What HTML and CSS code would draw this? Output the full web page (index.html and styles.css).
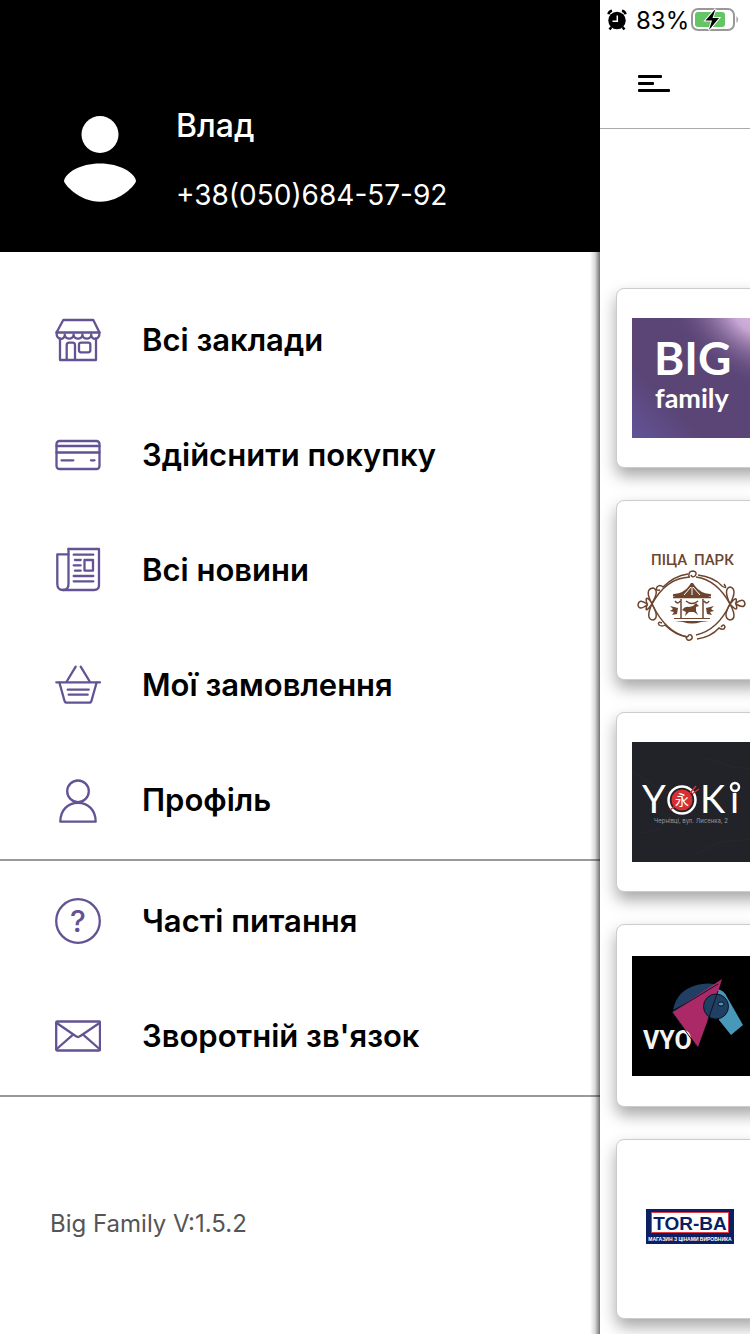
FILE: index.html
```html
<!DOCTYPE html>
<html lang="uk">
<head>
    <meta charset="UTF-8">
    <meta name="viewport" content="width=device-width, initial-scale=1.0">
    <title>Big Family</title>
    <link rel="stylesheet" href="styles.css">
</head>
<body>

<div class="app">
    <aside class="drawer">
        <header class="user">
            <svg class="avatar" viewBox="0 0 72 86">
                <circle cx="36" cy="18.5" r="18.5"/>
                <path d="M0 65C1 57 16 47.5 36 47.5S71 57 72 65C72 68 57 85.7 36 85.7S0 68 0 65Z"/>
            </svg>
            <div class="user-info">
                <div class="user-name">Влад</div>
                <div class="user-phone">+38(050)684-57-92</div>
            </div>
        </header>

        <div class="drawer-body">
            <nav class="menu menu-main">
                <a href="#">
                    <svg class="icon" viewBox="0 0 46 46">
                        <path d="M8.3 3h30l6.2 12.5h-43z"/>
                        <path d="M1.5 15.5c0 8 8.3 8 8.3 2c0 5.5 8.8 5.5 8.8 0c0 5.5 8.8 5.5 8.8 0c0 5.5 8.8 5.5 8.8 0c0 6 8.3 6 8.3-2"/>
                        <path d="M5 21.5V43h36V21.5"/>
                        <path d="M11.7 43V28.2q0-2.5 2.5-2.5h3.3q2.5 0 2.5 2.5V43"/>
                        <rect x="24" y="25.7" width="11.3" height="9.6" rx="2"/>
                    </svg>
                    <span>Всі заклади</span>
                </a>
                <a href="#">
                    <svg class="icon" viewBox="0 0 46 46">
                        <rect x="1.5" y="9" width="43" height="28" rx="3"/>
                        <path d="M1.5 14h43M1.5 20.5h43M6.5 28.3h11.8M36 28.3h3.5"/>
                    </svg>
                    <span>Здійснити покупку</span>
                </a>
                <a href="#">
                    <svg class="icon" viewBox="0 0 46 46">
                        <path d="M13.5 2H44v36q0 5-5 5H8q-5.7 0-5.7-6V7.3h11.2"/>
                        <path d="M13.5 2v35q0 6-5.5 6"/>
                        <path d="M18.7 7.7h19.6M20 13h5.7M18.7 18.3h7M20 23.7h5.7M18.7 29h19.6M18.7 34.3h19.6"/>
                        <rect x="29.5" y="13" width="8.5" height="10.7"/>
                    </svg>
                    <span>Всі новини</span>
                </a>
                <a href="#">
                    <svg class="icon" viewBox="0 0 46 46">
                        <path d="M1.3 20.3h43.7M4.3 20.3l5.2 18.4q.5 2 2.5 2h22q2 0 2.5-2l5.2-18.4"/>
                        <path d="M11.7 19.5l9-14.8M25.7 4.7l9 14.8M12.7 27.7h21M13.7 32.7h19"/>
                    </svg>
                    <span>Мої замовлення</span>
                </a>
                <a href="#">
                    <svg class="icon" viewBox="0 0 46 46">
                        <circle cx="23" cy="14.3" r="10.8"/>
                        <path d="M5.3 44.7C5.3 33 13 25.9 23 25.9S40.7 33 40.7 44.7Z"/>
                    </svg>
                    <span>Профіль</span>
                </a>
            </nav>
            <nav class="menu">
                <a href="#">
                    <svg class="icon" viewBox="0 0 46 46">
                        <circle cx="23" cy="23" r="21.8"/>
                        <text x="23" y="34" text-anchor="middle">?</text>
                    </svg>
                    <span>Часті питання</span>
                </a>
                <a href="#">
                    <svg class="icon" viewBox="0 0 46 46">
                        <rect x="1.2" y="8.5" width="43.8" height="29" rx="1"/>
                        <path d="M1.7 10l19.3 13.2q2 1.6 4 0L44.5 10M18.3 21.4L1.7 36M27.8 21.4L44.5 36"/>
                    </svg>
                    <span>Зворотній зв'язок</span>
                </a>
            </nav>
            <p class="version">Big Family V:1.5.2</p>
        </div>
    </aside>

    <main class="page">
        <div class="status">
            <svg class="alarm" viewBox="0 0 20 22">
                <circle cx="10" cy="11.5" r="8.7"/>
                <path d="M1.5 5.2Q2 2.5 5 1.8M18.5 5.2Q18 2.5 15 1.8M4.5 18l-2 2.5M15.5 18l2 2.5"/>
                <path class="hands" d="M10.3 6.5v5.8H5.5"/>
            </svg>
            <span>83%</span>
            <svg class="battery" viewBox="0 0 48 24">
                <rect class="shell" x="1" y="1" width="42" height="21" rx="6"/>
                <path class="shell-tip" d="M45.5 8q3 3.5 0 7z"/>
                <rect class="charge" x="4" y="4" width="30" height="15" rx="3"/>
                <path class="bolt" d="M24.5 1L14.5 12.5h6.500l-3 9.500L28 10h-6.500z"/>
            </svg>
        </div>
        <div class="topbar">
            <button class="burger" aria-label="Меню"><i></i><i></i><i></i></button>
        </div>

        <div class="shops">
            <a class="card" href="#">
                <svg class="logo" viewBox="0 0 120 120">
                    <defs>
                        <linearGradient id="bg" x1="0" y1="1" x2="1" y2="0">
                            <stop offset="0" stop-color="#625497"/>
                            <stop offset=".3" stop-color="#5b4577"/>
                            <stop offset="1" stop-color="#5b4577"/>
                        </linearGradient>
                        <radialGradient id="glow" gradientUnits="userSpaceOnUse" cx="0" cy="0" r="1" gradientTransform="translate(120 0) rotate(35) scale(100 62)">
                            <stop offset="0" stop-color="#d2b0dd"/>
                            <stop offset=".2" stop-color="#c8a7d4"/>
                            <stop offset="1" stop-color="#5b4577" stop-opacity="0"/>
                        </radialGradient>
                    </defs>
                    <rect width="120" height="120" fill="url(#bg)"/>
                    <rect width="120" height="120" fill="url(#glow)"/>
                    <g class="big-family">
                        <text x="22" y="57" font-size="46">BIG</text>
                        <text x="23" y="90" font-size="27">family</text>
                    </g>
                </svg>
            </a>
            <a class="card" href="#">
                <svg class="logo park" viewBox="0 0 120 120">
                    <text x="19" y="35">ПІЦА</text>
                    <text x="62" y="35">ПАРК</text>
                    <path d="M20 74Q34 48 58 47M64 47Q85 50 98 74Q86 100 64 105M56 107Q34 103 20 74"/>
                    <path d="M28 60q-5 1-3-3q3-3 6 0Q42 46 56 44M66 45q16 2 24 11q6 4 2-2M30 93q-5-2-3 2q3 2 6 0q10 10 22 12M65 109q14-2 22-11q5 3 6-1q-1-4-4 0"/>
                    <path d="M57 47q-1-6 4-6q5 1 2 5q-3 2-4-1M54 106q0 5 4 4q4-2 1-5q-3-1-3 2"/>
                    <path d="M20 74q-8-15 1-16q7 2-1 15q-8-10-5 1q-8-6-9 1q1 6 9 0q-3 10 5-1q8 14 1 16q-8-1-1-16M98 74q8-15 0-17q-7 2 0 17q8-10 6-1q8-6 9 1q-1 5-9 0q3 10-6 0q-8 14 0 16q8-1 0-16"/>
                    <path class="fill" d="M41 66q0-3 1-2q10-1 15-8l2-3h2l2 3q5 7 15 8q1-1 1 2l-3 1H43zM42 88h36v1H42zM43 91h34l-8 1q-9 3-18 0z"/>
                    <path class="fill" d="M50 80q3-4 7-3l4-1 3-3 3 3-3 1v4l2 4-4-3h-5l-4 4 1-4zM38 76l8 2-1 6-5 1 2-3-4-1 3-2zM82 76l-8 2 1 6 5 1-2-3 4-1-3-2z"/>
                    <path d="M41 67.5h38M49 69v19M71 69v19M43 71q3 4 5 0M54 71q6 5 12 0M72 71q3 4 5 0"/>
                    <path class="slots" d="M59 57l-7 8M60 57v8M61 57l7 8"/>
                </svg>
            </a>
            <a class="card" href="#">
                <svg class="logo" viewBox="0 0 120 120">
                    <rect width="120" height="120" fill="#222328"/>
                    <path d="M0 30l30 18l14 7M72 16l28 9l20 2M60 114l28-14l32-3M5 92l24-5" fill="none" stroke="#27282d"/>
                    <g class="yoki">
                        <text x="10" y="71">Y</text>
                        <text x="68" y="71">K</text>
                        <text x="98" y="71">ı</text>
                        <circle cx="50" cy="58" r="13.5"/>
                        <circle cx="103" cy="45" r="4"/>
                    </g>
                    <circle cx="50" cy="58" r="10.5" fill="#d72f32"/>
                    <path d="M38 68l5-4M58 51l6-7M60 52l7-5" stroke="#d72f32" stroke-width="1.5"/>
                    <text class="kanji" x="50" y="63" text-anchor="middle">永</text>
                    <text class="address" x="59" y="81" text-anchor="middle">Чернівці, вул. Лисенка, 2</text>
                </svg>
            </a>
            <a class="card card-tall" href="#">
                <svg class="logo" viewBox="0 0 120 120">
                    <rect width="120" height="120"/>
                    <path d="M41 54Q45 34 65 29Q75 26 88 29z" fill="#213e63"/>
                    <path d="M85 33q7 1 10 8l16 28-12 10-12-15z" fill="#4898b9"/>
                    <path d="M40 56L90 23l-4 13L66 91z" fill="#ab2967"/>
                    <circle cx="84" cy="50.5" r="12.5" fill="#213e63" stroke="#0b1524"/>
                    <text class="vyo" x="11" y="93">VYO</text>
                    <path d="M86 35L76 64M40 56L65 91M40 56L86 28" fill="none" stroke="#0b1524"/>
                    <ellipse cx="89" cy="48" rx="3" ry="2" fill="#4898b9" stroke="#0b1524"/>
                </svg>
            </a>
            <a class="card" href="#">
                <svg class="logo" viewBox="0 0 120 120">
                    <rect x="14" y="40" width="88" height="35" fill="#0b1f62"/>
                    <rect x="19.5" y="43.5" width="77" height="20" fill="#fff" stroke="#df3a45"/>
                    <text class="torba" x="58" y="61" text-anchor="middle">TOR-BA</text>
                    <text class="torba-sub" x="58" y="72" text-anchor="middle">МАГАЗИН З ЦІНАМИ ВИРОБНИКА</text>
                </svg>
            </a>
        </div>
    </main>
</div>

</body>
</html>
```
FILE: styles.css
```css
* {
    box-sizing: border-box;
}
body {
    margin: 0;
    font-family: Inter, "Liberation Sans", sans-serif;
    color: #000;
    background-color: #fff;
}
a {
    color: inherit;
    text-decoration: none;
}
svg {
    display: block;
    flex: none;
}
.app {
    display: flex;
    height: 100vh;
    overflow: hidden;
}

/* Side menu */
.drawer {
    width: 80%;
    display: flex;
    flex-direction: column;
}
.user {
    display: flex;
    align-items: center;
    gap: 40px;
    padding: 106px 64px 40px;
    color: #fff;
    background-color: #000;
}
.avatar {
    width: 72px;
    height: 86px;
    fill: #fff;
}
.user-info {
    display: flex;
    flex-direction: column;
    gap: 32px;
}
.user-name {
    font-size: 32px;
    line-height: 40px;
    font-weight: 500;
}
.user-phone {
    font-size: 28px;
    line-height: 34px;
}
.drawer-body {
    position: relative;
    flex: 1;
}
.drawer-body::after {
    content: "";
    position: absolute;
    top: 0;
    right: 0;
    bottom: 0;
    width: 10px;
    background: linear-gradient(to left, rgba(0, 0, 0, 0.55), rgba(0, 0, 0, 0.15) 50%, transparent);
}
.menu {
    padding: 2px 0;
    border-bottom: 2px solid #999;
}
.menu-main {
    padding-top: 30px;
}
.menu a {
    display: flex;
    align-items: center;
    gap: 41px;
    height: 115px;
    padding-left: 55px;
    font-size: 31px;
    line-height: 40px;
    font-weight: 600;
}
.icon {
    width: 46px;
    height: 46px;
    fill: none;
    stroke: #635394;
    stroke-width: 2.3;
    stroke-linecap: round;
    stroke-linejoin: round;
}
.icon text {
    font-size: 30px;
    font-weight: 500;
    fill: #635394;
    stroke: none;
}
.version {
    margin: 112px 0 0 50px;
    font-size: 24px;
    line-height: 30px;
    color: #555;
}

/* Page behind the menu */
.page {
    width: 20%;
}
.status {
    display: flex;
    align-items: center;
    height: 40px;
    padding-left: 7px;
    font-size: 24px;
    white-space: nowrap;
}
.status span {
    margin: 0 2px 0 9px;
}
.alarm {
    width: 20px;
    height: 22px;
}
.alarm path {
    fill: none;
    stroke: #000;
    stroke-width: 2.5;
}
.alarm .hands {
    stroke: #fff;
    stroke-width: 1.5;
}
.battery {
    width: 48px;
    height: 24px;
}
.shell {
    fill: none;
    stroke: #999;
    stroke-width: 2;
}
.shell-tip {
    fill: #999;
}
.charge {
    fill: #65c466;
}
.bolt {
    stroke: #fff;
    stroke-width: 2;
    paint-order: stroke;
}
.topbar {
    height: 89px;
    padding: 35px 0 0 38px;
    border-bottom: 1px solid #aaa;
}
.burger {
    display: flex;
    flex-direction: column;
    gap: 4px;
    padding: 0;
    border: none;
    background: none;
}
.burger i {
    width: 24px;
    height: 3px;
    border-radius: 1px;
    background-color: #000;
}
.burger i:nth-child(2) {
    width: 16px;
}
.burger i:nth-child(3) {
    width: 32px;
}
.shops {
    display: flex;
    flex-direction: column;
    gap: 32px;
    margin-right: -16px;
    padding: 159px 0 16px 16px;
}
.card {
    display: flex;
    align-items: center;
    height: 180px;
    padding-left: 15px;
    border: 1px solid #ccc;
    border-radius: 8px;
    background-color: #fff;
    box-shadow: 0 8px 16px rgba(0, 0, 0, 0.35);
}
.card-tall {
    height: 183px;
}
.logo {
    width: 120px;
    height: 120px;
}
.big-family {
    font-family: Lato, sans-serif;
    font-weight: 700;
    fill: #fff;
}
.park {
    font-family: Roboto, sans-serif;
    font-size: 15px;
    font-weight: 500;
    fill: #6d452f;
}
.park path {
    fill: none;
    stroke: #6d452f;
    stroke-width: 1.5;
}
.park .fill {
    fill: #6d452f;
    stroke: none;
}
.park .slots {
    stroke: #fff;
    stroke-width: 1;
}
.yoki {
    font-family: Lato, sans-serif;
    font-size: 38px;
    fill: #fff;
}
.yoki circle {
    fill: none;
    stroke: #fff;
    stroke-width: 2.5;
}
.kanji {
    font-family: "Noto Sans CJK JP", sans-serif;
    font-size: 14px;
    fill: #fff;
}
.address {
    font-size: 6px;
    fill: #999;
}
.vyo {
    font-family: Roboto, sans-serif;
    font-size: 25px;
    font-weight: 700;
    fill: #f4f4f4;
}
.torba {
    font-family: "Liberation Sans", sans-serif;
    font-size: 19px;
    font-weight: 700;
    fill: #0b1f62;
}
.torba-sub {
    font-family: "Liberation Sans", sans-serif;
    font-size: 5px;
    font-weight: 700;
    fill: #fff;
}
```
